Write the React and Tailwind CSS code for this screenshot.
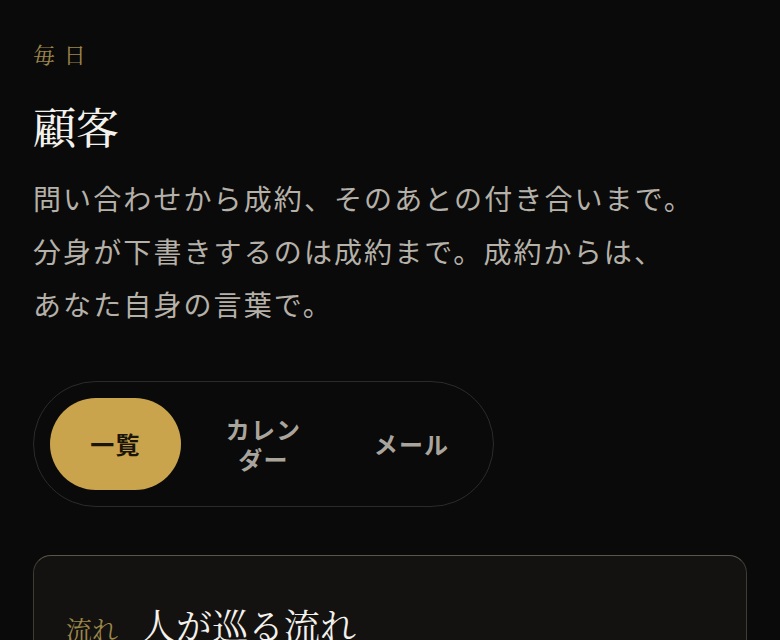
import React, { useState } from 'react';

const serif = { fontFamily: '"Noto Serif CJK JP", "Noto Serif JP", "Liberation Serif", "Noto Sans CJK JP", serif' };

export default function App() {
  const [tab, setTab] = useState('list');
  const tabs = [
    { id: 'list', label: '一覧' },
    { id: 'cal', label: 'カレンダー' },
    { id: 'mail', label: 'メール' },
  ];

  return (
    <div className="h-screen bg-[#0a0a0a] px-[33px] pt-[38px] overflow-hidden font-['Noto_Sans_CJK_JP',sans-serif]">
      <div className="text-[22px] leading-[32px] tracking-[0.4em] text-[#9c864a]" style={serif}>毎日</div>
      <h1 className="mt-[28px] text-[43px] leading-[56px] font-medium text-[#f3f1ec]" style={serif}>顧客</h1>
      <div className="mt-[18px] text-[28px] leading-[53px] tracking-[0.075em] text-[#b5b1a9]">
        <p>問い合わせから成約、そのあとの付き合いまで。</p>
        <p>分身が下書きするのは成約まで。成約からは、</p>
        <p>あなた自身の言葉で。</p>
      </div>

      <div className="mt-[50px] inline-flex gap-[17px] p-[16px] rounded-full border border-[#2b2b2b]">
        {tabs.map((t) => (
          <button
            key={t.id}
            onClick={() => setTab(t.id)}
            className={
              'w-[131px] h-[92px] rounded-full flex items-center justify-center px-[22px] text-[24px] leading-[30px] font-bold tracking-[0.05em] ' +
              (tab === t.id ? 'bg-[#c9a44c] text-[#1a1508]' : 'text-[#a9a59d]')
            }
          >
            {t.label}
          </button>
        ))}
      </div>

      <div className="mt-[48px] rounded-[18px] border border-[#3f3c35] border-t-[#5a564c] bg-[#131210] px-[32px] pt-[42px] pb-[40px]">
        <div className="flex items-baseline gap-[22px]">
          <span className="text-[26px] text-[#9c864a]" style={serif}>流れ</span>
          <span className="text-[36px] text-[#f3f1ec]" style={serif}>人が巡る流れ</span>
        </div>
      </div>
    </div>
  );
}
